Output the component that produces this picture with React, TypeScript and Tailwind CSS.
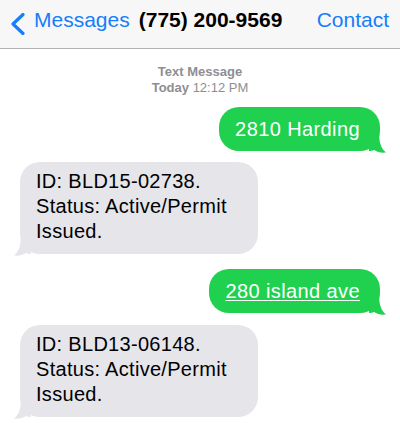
function TailRight() {
  return (
    <svg
      className="absolute -right-[7px] bottom-[-2px]"
      width="18"
      height="22"
      viewBox="0 0 18 22"
    >
      <path d="M0 0H10C10 12 12 17 17 21.5C12 22 8 21 5 19C3.5 19.8 1.5 20 0 20Z" fill="#20d14f" />
    </svg>
  );
}

function TailLeft() {
  return (
    <svg
      className="absolute -left-[7px] bottom-[-2px]"
      width="18"
      height="22"
      viewBox="0 0 18 22"
    >
      <path d="M18 0H8C8 12 6 17 1 21.5C6 22 10 21 13 19C14.5 19.8 16.5 20 18 20Z" fill="#e5e5ea" />
    </svg>
  );
}

function Sent({ children }: { children: React.ReactNode }) {
  return (
    <div className="flex justify-end pr-5">
      <div className="relative rounded-[20px] bg-[#20d14f] pl-[16px] pr-[20px] pt-[10px] pb-[9px] text-[20px] leading-[25px] tracking-[0.4px] text-white">
        <TailRight />
        <span className="relative">{children}</span>
      </div>
    </div>
  );
}

function Received({ children }: { children: React.ReactNode }) {
  return (
    <div className="flex pl-5">
      <div className="relative w-[238px] rounded-[20px] bg-[#e5e5ea] pl-4 pr-3 pt-[7px] pb-[10px] text-[20px] leading-[25px] tracking-[0.3px] text-black">
        <TailLeft />
        <p className="relative">{children}</p>
      </div>
    </div>
  );
}

export default function App() {
  return (
    <div className="h-[423px] w-[400px] overflow-hidden bg-white font-['Liberation_Sans',Arial,sans-serif]">
      {/* Header */}
      <div className="flex h-[49px] items-start border-b border-[#b2b2b2] bg-[#f7f7f8] pt-2 pr-[11px] text-[21px] leading-[24px]">
        <svg className="ml-[9px] mt-[5px]" width="16" height="22" viewBox="0 0 16 22">
          <polyline
            points="14,1.5 4,11 14,20.5"
            fill="none"
            stroke="#157efb"
            strokeWidth="3.2"
            strokeLinecap="round"
            strokeLinejoin="round"
          />
        </svg>
        <span className="ml-[9px] text-[#157efb]">Messages</span>
        <span className="ml-[9px] font-bold text-black">(775) 200-9569</span>
        <span className="ml-auto text-[#157efb]">Contact</span>
      </div>

      {/* Timestamp */}
      <div className="pt-[15px] text-center text-[13px] leading-4 text-[#8e8e93]">
        <div className="font-bold">Text Message</div>
        <div>
          <span className="font-bold">Today</span> 12:12 PM
        </div>
      </div>

      <div className="mt-[11px]">
        <Sent>2810 Harding</Sent>
      </div>
      <div className="mt-[11px]">
        <Received>
          ID: BLD15-02738.
          <br />
          Status: Active/Permit
          <br />
          Issued.
        </Received>
      </div>
      <div className="mt-[15px]">
        <Sent>
          <span className="underline underline-offset-2 decoration-1">280 island ave</span>
        </Sent>
      </div>
      <div className="mt-[12px]">
        <Received>
          ID: BLD13-06148.
          <br />
          Status: Active/Permit
          <br />
          Issued.
        </Received>
      </div>
    </div>
  );
}
